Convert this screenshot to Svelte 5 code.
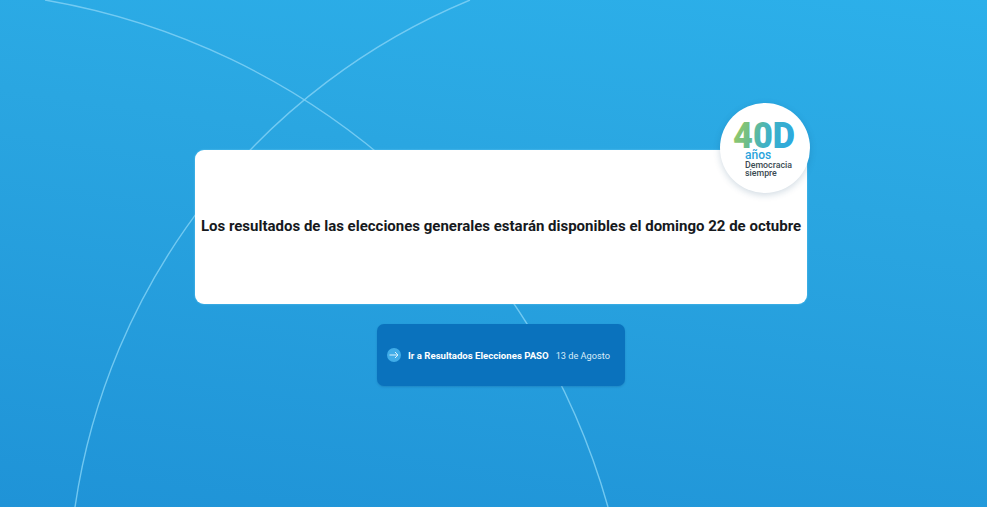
<script>
  const title = 'Los resultados de las elecciones generales estarán disponibles el domingo 22 de octubre';
</script>

<main class="page">
  <svg class="arcs" viewBox="0 0 987 507" aria-hidden="true">
    <path d="M45 0 A709.8 709.8 0 0 1 608 507" />
    <path d="M470 0 A651.2 651.2 0 0 0 75 507" />
  </svg>

  <section class="card">
    <h1>{title}</h1>
    <div class="badge">
      <svg viewBox="0 0 90 90" width="90" height="90" role="img" aria-label="40D años Democracia siempre">
        <defs>
          <linearGradient id="logo" gradientUnits="userSpaceOnUse" x1="13" y1="20" x2="75" y2="40">
            <stop offset="0" stop-color="#9ecb5e" />
            <stop offset="0.3" stop-color="#6cbd8c" />
            <stop offset="0.55" stop-color="#41b2c4" />
            <stop offset="1" stop-color="#29a8e2" />
          </linearGradient>
        </defs>
        <text x="13" y="45" class="big" fill="url(#logo)" textLength="62" lengthAdjust="spacingAndGlyphs">40D</text>
        <text x="25" y="55.5" class="anos">años</text>
        <text x="25" y="64.5" class="small">Democracia</text>
        <text x="25" y="72.5" class="small">siempre</text>
      </svg>
    </div>
  </section>

  <a class="cta" href="#paso">
    <span class="dot">
      <svg viewBox="0 0 14 14" width="14" height="14" aria-hidden="true">
        <path d="M2.5 7H11M8 4l3 3-3 3" />
      </svg>
    </span>
    <strong>Ir a Resultados Elecciones PASO</strong>
    <span class="date">13 de Agosto</span>
  </a>
</main>

<style>
  :global(body) {
    margin: 0;
  }

  .page {
    position: relative;
    height: 507px;
    overflow: hidden;
    display: flex;
    flex-direction: column;
    align-items: center;
    padding: 150px 0 0 15px;
    box-sizing: border-box;
    background: linear-gradient(188deg, #2cb0ea 0%, #2aa6e1 35%, #1f93d7 100%);
    font-family: Roboto, "Noto Sans", sans-serif;
  }

  .arcs {
    position: absolute;
    inset: 0;
    width: 100%;
    height: 100%;
  }

  .arcs path {
    fill: none;
    stroke: #7fd0f5;
    stroke-width: 1.4;
    opacity: 0.85;
  }

  .card {
    position: relative;
    width: 612px;
    height: 154px;
    background: #fff;
    border-radius: 9px;
    display: flex;
    align-items: center;
    justify-content: center;
    box-shadow: 0 0 2px rgba(120, 215, 250, 0.8);
  }

  h1 {
    margin: 0 0 3px;
    font-size: 15px;
    font-weight: 700;
    line-height: 20px;
    color: #16191d;
    white-space: nowrap;
  }

  .badge {
    position: absolute;
    top: -47px;
    right: -3px;
    width: 90px;
    height: 90px;
    border-radius: 50%;
    background: #fff;
    box-shadow: 0 2px 7px rgba(20, 70, 110, 0.2);
  }

  .big {
    font-family: Roboto, sans-serif;
    font-size: 36px;
    font-weight: 900;
  }

  .anos {
    font-family: Roboto, sans-serif;
    font-size: 12px;
    font-weight: 500;
    fill: #2aa3dc;
  }

  .small {
    font-family: Roboto, sans-serif;
    font-size: 8.8px;
    font-weight: 500;
    fill: #3a4a52;
  }

  .cta {
    position: relative;
    margin-top: 20px;
    width: 248px;
    height: 62px;
    box-sizing: border-box;
    padding-left: 10px;
    display: flex;
    align-items: center;
    background: #0a72bd;
    border-radius: 7px;
    box-shadow: 0 1px 2px rgba(10, 70, 130, 0.25);
    color: #fff;
    text-decoration: none;
    font-size: 9.65px;
    white-space: nowrap;
  }

  .dot {
    flex: none;
    width: 14px;
    height: 14px;
    border-radius: 50%;
    background: #40ace8;
    display: flex;
    margin-right: 7px;
  }

  .dot path {
    fill: none;
    stroke: #d8f0fc;
    stroke-width: 1;
  }

  .cta strong {
    font-weight: 700;
    margin-right: 7px;
  }

  .date {
    font-size: 9.2px;
    color: #d8ecf9;
  }
</style>
